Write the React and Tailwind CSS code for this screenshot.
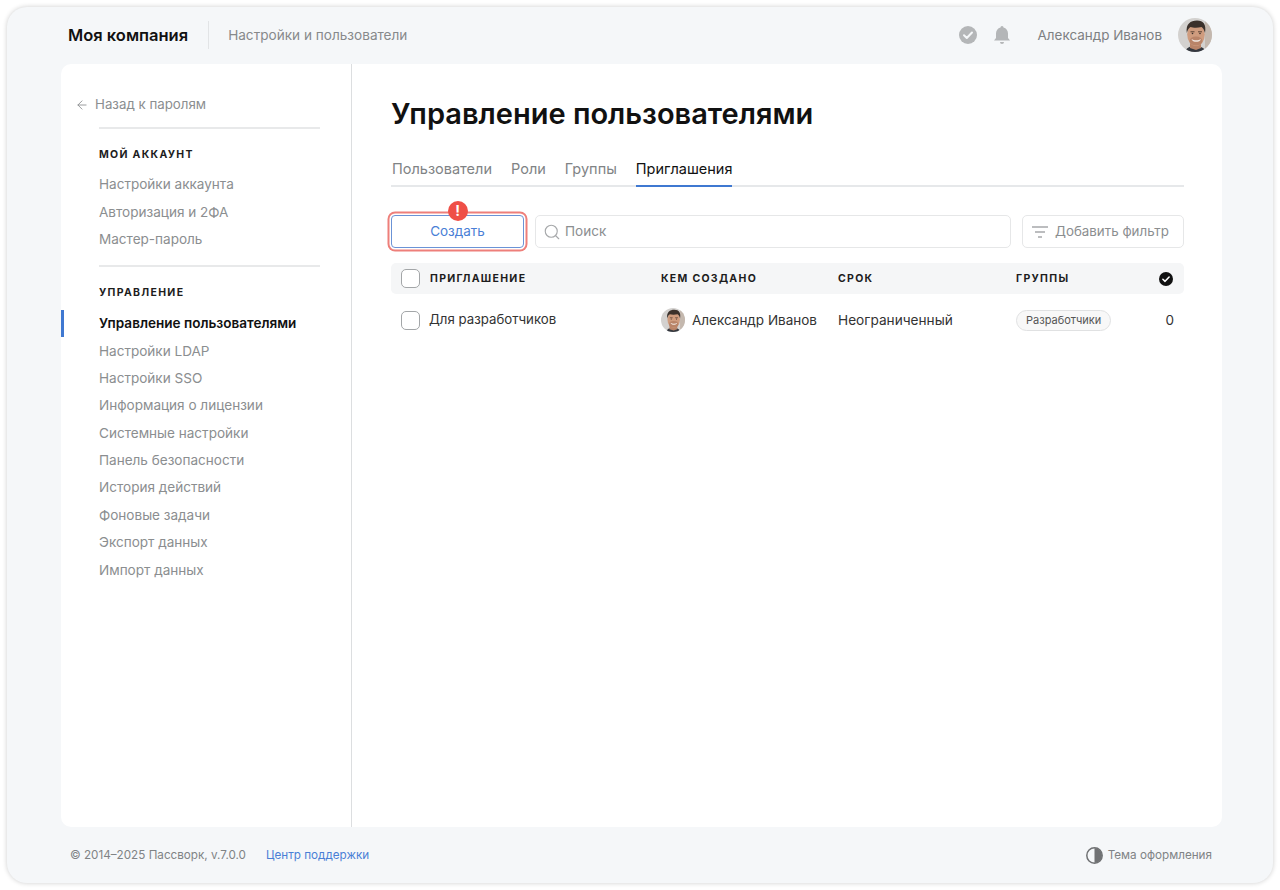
import { ArrowLeft, Search } from "lucide-react";

function Avatar({ size }) {
  return (
    <svg width={size} height={size} viewBox="0 0 34 34" className="shrink-0">
      <defs>
        <clipPath id={"av" + size}>
          <circle cx="17" cy="17" r="17" />
        </clipPath>
      </defs>
      <g clipPath={"url(#av" + size + ")"}>
        <rect width="34" height="34" fill="#d3d1cf" />
        <rect x="27" width="7" height="34" fill="#c4b8ae" />
        <path d="M7 34c1-4 5-6 10-6s10 2 11 6z" fill="#34383f" />
        <path d="M12 24h11v6l-5 2-6-2z" fill="#b98468" />
        <ellipse cx="18" cy="16.500" rx="8.800" ry="11.500" fill="#cf9c7e" />
        <ellipse cx="18" cy="23" rx="6.500" ry="4.500" fill="#b98468" />
        <path d="M8.800 15C7.500 6 12.500 2.500 19 2.500c6.500 0 9.500 4 8 12.500-.8-3-1.800-5-3.500-6-4 1-8.500.8-11 0-1.700 1-3 3-3.700 6z" fill="#3b312b" />
        <path d="M12.500 13.800h4M20 13.800h4" stroke="#5a4335" strokeWidth="1" />
        <circle cx="14.500" cy="15.500" r=".8" fill="#3b312b" />
        <circle cx="22" cy="15.500" r=".8" fill="#3b312b" />
        <path d="M13.500 21c2.500 1.800 7 1.800 9.500 0-1 3.800-8.500 3.800-9.500 0z" fill="#f1e7e0" />
      </g>
    </svg>
  );
}

function CheckCircle({ size, bg, fg }) {
  return (
    <svg width={size} height={size} viewBox="0 0 18 18">
      <circle cx="9" cy="9" r="9" fill={bg} />
      <path d="M5 9.300l2.800 2.700L13 6.500" stroke={fg} strokeWidth="2" fill="none" strokeLinecap="round" strokeLinejoin="round" />
    </svg>
  );
}

function Checkbox() {
  return <div className="h-[19px] w-[19px] shrink-0 rounded-[5px] border-[1.5px] border-[#a3a6a8] bg-white" />;
}

function NavItem({ label, active }) {
  if (active) {
    return (
      <div className="flex h-[27.4px] items-center border-l-[3px] border-[#3f78d1] pl-[35px] text-[13.550px] font-semibold text-[#111]">
        {label}
      </div>
    );
  }
  return <div className="flex h-[27.4px] items-center pl-[38px] text-[13.550px] text-[#8b8e90]">{label}</div>;
}

function SectionTitle({ children }) {
  return <div className="pl-[38px] text-[10.500px] font-bold tracking-[1.300px] text-[#1d1d1d]">{children}</div>;
}

export default function App() {
  return (
    <div className="h-[890px] w-[1280px] bg-white p-[7px] font-['Inter',sans-serif]">
      <div className="flex h-[876px] flex-col rounded-[20px] bg-[#f5f7f9] pr-[51px] pl-[54px] shadow-[0_0_5px_rgba(0,0,0,0.2)]">
        {/* Header */}
        <header className="flex h-[57px] shrink-0 items-center pr-[10px] pb-[1px] pl-[7px]">
          <span className="text-[16.500px] font-semibold text-[#111]">Моя компания</span>
          <div className="mr-[19px] ml-[20px] h-[28px] w-px bg-[#e2e4e6]" />
          <span className="text-[13.600px] text-[#87898b]">Настройки и пользователи</span>
          <div className="ml-auto flex items-center">
            <CheckCircle size={18} bg="#b4b6b8" fg="#f5f7f9" />
            <svg width="18" height="20" viewBox="0 0 18 20" className="ml-[16px]" fill="#b4b6b8">
              <path d="M9 1a1.500 1.500 0 0 1 1.500 1.600C13.300 3.300 15 5.700 15 8.500V13l2 2.500H1L3 13V8.500c0-2.800 1.700-5.200 4.500-5.900A1.500 1.500 0 0 1 9 1z" />
              <path d="M7 17h4a2 2 0 0 1-4 0z" />
            </svg>
            <span className="mr-[16px] ml-[27px] text-[13.450px] text-[#7d8082]">Александр Иванов</span>
            <Avatar size={34} />
          </div>
        </header>

        {/* Main card */}
        <div className="flex min-h-0 flex-1 rounded-[10px] bg-white">
          <aside className="w-[291px] shrink-0 border-r border-[#dcdee0] pt-[31px]">
            <div className="flex items-center pl-[14px] text-[13.300px] text-[#8b8e90]">
              <ArrowLeft size={14} strokeWidth={1.500} className="mr-[6px]" />
              Назад к паролям
            </div>
            <div className="mt-[12px] mr-[31px] ml-[38px] h-[2px] bg-[#e8e9ea]" />
            <div className="mt-[18px]">
              <SectionTitle>МОЙ АККАУНТ</SectionTitle>
            </div>
            <div className="mt-[8px]">
              <NavItem label="Настройки аккаунта" />
              <NavItem label="Авторизация и 2ФА" />
              <NavItem label="Мастер-пароль" />
            </div>
            <div className="mt-[12px] mr-[31px] ml-[38px] h-[2px] bg-[#e8e9ea]" />
            <div className="mt-[18px]">
              <SectionTitle>УПРАВЛЕНИЕ</SectionTitle>
            </div>
            <div className="mt-[9px]">
              <NavItem label="Управление пользователями" active />
              <NavItem label="Настройки LDAP" />
              <NavItem label="Настройки SSO" />
              <NavItem label="Информация о лицензии" />
              <NavItem label="Системные настройки" />
              <NavItem label="Панель безопасности" />
              <NavItem label="История действий" />
              <NavItem label="Фоновые задачи" />
              <NavItem label="Экспорт данных" />
              <NavItem label="Импорт данных" />
            </div>
          </aside>

          <main className="min-w-0 flex-1 pt-[29px] pr-[38px] pl-[39px]">
            <h1 className="text-[29px] leading-[42px] font-semibold text-[#111]">Управление пользователями</h1>
            <div className="mt-[15px] flex h-[37px] gap-[19px] border-b-2 border-[#e6e8ea] pl-px text-[14.500px]">
              <span className="pt-[8px] text-[#808385]">Пользователи</span>
              <span className="pt-[8px] text-[#808385]">Роли</span>
              <span className="pt-[8px] text-[#808385]">Группы</span>
              <span className="-mb-[2px] border-b-2 border-[#3f78d1] pt-[8px] text-[#111]">Приглашения</span>
            </div>

            {/* Toolbar */}
            <div className="mt-[28px] flex items-center gap-[11px]">
              <div className="relative">
                <button className="h-[33px] w-[133px] rounded-[4px] border-[1.500px] border-[#6b93d6] bg-white text-[13.500px] text-[#4a7fd6] shadow-[0_0_0_1.5px_#fff,0_0_0_3.5px_#ee7f7a]">
                  Создать
                </button>
                <div className="absolute -top-[14px] left-1/2 flex h-[20px] w-[20px] -translate-x-1/2 items-center justify-center rounded-full bg-[#ef4f47] text-[14px] leading-none font-bold text-white">
                  !
                </div>
              </div>
              <div className="flex h-[33px] flex-1 items-center rounded-[5px] border-[1.500px] border-[#e6e7e8] pl-[7px] text-[13.550px] text-[#8b8e90]">
                <Search size={18} strokeWidth={1.500} className="mr-[4px] text-[#a6a8aa]" />
                Поиск
              </div>
              <div className="flex h-[33px] w-[162px] items-center rounded-[5px] border-[1.500px] border-[#e6e7e8] pl-[9px] text-[13.350px] text-[#8b8e90]">
                <svg width="16" height="12" viewBox="0 0 16 12" className="mr-[7px]" stroke="#a6a8aa" strokeWidth="1.300">
                  <path d="M0 1h16M3 6h10M6 11h4" />
                </svg>
                Добавить фильтр
              </div>
            </div>

            {/* Table */}
            <div className="mt-[15px] flex h-[31px] items-center rounded-[5px] bg-[#f5f6f7] text-[10.500px] font-bold tracking-[1.300px] text-[#1d1d1d]">
              <div className="flex w-[270px] items-center gap-[10px] pl-[10px]">
                <Checkbox />
                ПРИГЛАШЕНИЕ
              </div>
              <div className="w-[177px]">КЕМ СОЗДАНО</div>
              <div className="w-[178px]">СРОК</div>
              <div className="flex-1">ГРУППЫ</div>
              <div className="pr-[11px]">
                <CheckCircle size={14} bg="#111" fg="#fff" />
              </div>
            </div>
            <div className="flex h-[52px] items-center text-[13.500px] text-[#333]">
              <div className="flex w-[270px] items-center gap-[9px] pl-[10px] text-[13.250px]">
                <Checkbox />
                Для разработчиков
              </div>
              <div className="flex w-[177px] items-center gap-[7px]">
                <Avatar size={24} />
                Александр Иванов
              </div>
              <div className="w-[178px] text-[13.650px]">Неограниченный</div>
              <div className="flex-1">
                <span className="inline-block rounded-full border border-[#e0e1e2] bg-[#f8f8f8] px-[9px] py-[1px] text-[11px] text-[#555]">
                  Разработчики
                </span>
              </div>
              <div className="pr-[10px]">0</div>
            </div>
          </main>
        </div>

        {/* Footer */}
        <footer className="flex h-[56px] shrink-0 items-center pt-[2px] pr-[10px] pl-[9px] text-[11.700px] text-[#808385]">
          <span>© 2014–2025 Пассворк, v.7.0.0</span>
          <span className="ml-[20px] text-[#4a7fd6]">Центр поддержки</span>
          <div className="ml-auto flex items-center gap-[5px]">
            <svg width="17" height="17" viewBox="0 0 17 17">
              <circle cx="8.500" cy="8.500" r="7.700" fill="none" stroke="#707274" strokeWidth="1.500" />
              <path d="M8.500 1a7.500 7.500 0 0 1 0 15z" fill="#707274" />
            </svg>
            Тема оформления
          </div>
        </footer>
      </div>
    </div>
  );
}
